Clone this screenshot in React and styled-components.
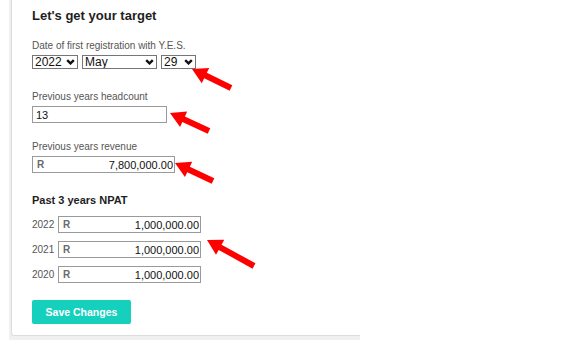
import React, { useState } from "react";
import styled, { createGlobalStyle } from "styled-components";

const GlobalStyle = createGlobalStyle`
  html, body {
    margin: 0;
    padding: 0;
    background: #ffffff;
    font-family: "Liberation Sans", Arial, sans-serif;
  }
`;

const Page = styled.div`
  position: relative;
  width: 572px;
  height: 340px;
  overflow: hidden;
  background: #ffffff;
`;

const Panel = styled.div`
  margin-left: 9px;
  width: 349px;
  height: 340px;
  padding-left: 2px;
  background: #f0f0f0;
`;

const Card = styled.div`
  display: flex;
  flex-direction: column;
  align-items: flex-start;
  background: #ffffff;
  border-left: 1px solid #dcdcdc;
  border-bottom: 1px solid #dcdcdc;
  border-bottom-left-radius: 3px;
  padding: 8px 0 11px 20px;
`;

const Title = styled.h2`
  margin: 0 0 16px;
  font-size: 13px;
  line-height: 16px;
  font-weight: 700;
  color: #1e1e1e;
`;

const Field = styled.div`
  display: flex;
  flex-direction: column;
  gap: 3px;
  margin-bottom: ${(p) => p.$gap || 0}px;
`;

const Label = styled.label`
  font-size: 10px;
  line-height: 12px;
  color: #555555;
`;

const SelectRow = styled.div`
  display: flex;
  gap: 4px;
`;

const SelectWrap = styled.div`
  position: relative;
  display: flex;
  width: ${(p) => p.$w}px;
  height: 14px;
`;

const Select = styled.select`
  appearance: none;
  -webkit-appearance: none;
  width: 100%;
  height: 100%;
  padding: 0 12px 0 2px;
  margin: 0;
  border: 1px solid #767676;
  border-radius: 0;
  background: #ffffff;
  font-family: "Liberation Sans", Arial, sans-serif;
  font-size: 12px;
  line-height: 12px;
  color: #111111;
  box-sizing: border-box;
  outline: none;
`;

const Chevron = styled.svg`
  position: absolute;
  right: 3px;
  top: 4px;
  pointer-events: none;
`;

const TextInput = styled.input`
  width: ${(p) => p.$w}px;
  height: 17px;
  box-sizing: border-box;
  margin: 0;
  padding: 0 3px;
  border: 1px solid #9a9a9a;
  font-family: "Liberation Sans", Arial, sans-serif;
  font-size: 11px;
  color: #111111;
  outline: none;
`;

const MoneyBox = styled.div`
  display: flex;
  align-items: center;
  width: 143px;
  height: 17px;
  box-sizing: border-box;
  border: 1px solid #9a9a9a;
  padding: 0 1px 0 4px;
  background: #ffffff;
`;

const Currency = styled.span`
  font-size: 10px;
  font-weight: 700;
  color: #6a6a6a;
`;

const MoneyInput = styled.input`
  flex: 1;
  min-width: 0;
  border: none;
  padding: 0;
  margin: 0;
  text-align: right;
  font-family: "Liberation Sans", Arial, sans-serif;
  font-size: 11px;
  color: #111111;
  background: transparent;
  outline: none;
`;

const SubTitle = styled.h3`
  margin: 0 0 9px;
  font-size: 11px;
  line-height: 13px;
  font-weight: 700;
  color: #1e1e1e;
`;

const YearList = styled.div`
  display: flex;
  flex-direction: column;
  gap: 8px;
  margin-bottom: 17px;
`;

const YearRow = styled.div`
  display: flex;
  align-items: center;
  gap: 4px;
`;

const Year = styled.span`
  width: 22px;
  font-size: 10px;
  color: #555555;
`;

const Button = styled.button`
  width: 99px;
  height: 24px;
  border: none;
  border-radius: 2px;
  background: #14d0bd;
  color: #ffffff;
  font-family: "Liberation Sans", Arial, sans-serif;
  font-size: 10.5px;
  font-weight: 700;
  cursor: pointer;
`;

const Overlay = styled.svg`
  position: absolute;
  left: 0;
  top: 0;
  pointer-events: none;
`;

const arrows = [
  { tip: [192, 69], tail: [231, 88] },
  { tip: [170, 113], tail: [209, 131] },
  { tip: [175, 163], tail: [213, 181] },
  { tip: [207, 240], tail: [254, 266] },
];

const arrowPoints = ({ tip, tail }) => {
  const dx = tip[0] - tail[0];
  const dy = tip[1] - tail[1];
  const len = Math.hypot(dx, dy);
  const ux = dx / len;
  const uy = dy / len;
  const nx = -uy;
  const ny = ux;
  const head = 15;
  const hw = 8.5;
  const sw = 3;
  const bx = tip[0] - ux * head;
  const by = tip[1] - uy * head;
  const p = [
    [tail[0] + nx * sw, tail[1] + ny * sw],
    [bx + nx * sw, by + ny * sw],
    [bx + nx * hw, by + ny * hw],
    tip,
    [bx - nx * hw, by - ny * hw],
    [bx - nx * sw, by - ny * sw],
    [tail[0] - nx * sw, tail[1] - ny * sw],
  ];
  return p.map((q) => q.join(",")).join(" ");
};

const npat = [
  { year: "2022", value: "1,000,000.00" },
  { year: "2021", value: "1,000,000.00" },
  { year: "2020", value: "1,000,000.00" },
];

const DropDown = ({ width, value, onChange, options }) => (
  <SelectWrap $w={width}>
    <Select value={value} onChange={onChange}>
      {options.map((o) => (
        <option key={o}>{o}</option>
      ))}
    </Select>
    <Chevron width="9" height="6" viewBox="0 0 9 6">
      <path d="M1.2 1.2 L4.5 4.4 L7.8 1.2" fill="none" stroke="#111" strokeWidth="2.4" />
    </Chevron>
  </SelectWrap>
);

const App = () => {
  const [values, setValues] = useState({
    year: "2022",
    month: "May",
    day: "29",
    headcount: "13",
    revenue: "7,800,000.00",
  });

  const handleChange = (name) => (event) => {
    setValues({ ...values, [name]: event.target.value });
  };

  return (
    <>
      <GlobalStyle />
      <Page>
        <Panel>
          <Card>
            <Title>Let's get your target</Title>

            <Field $gap={22}>
              <Label>Date of first registration with Y.E.S.</Label>
              <SelectRow>
                <DropDown width={46} value={values.year} onChange={handleChange("year")} options={["2022", "2021", "2020"]} />
                <DropDown width={75} value={values.month} onChange={handleChange("month")} options={["April", "May", "June"]} />
                <DropDown width={35} value={values.day} onChange={handleChange("day")} options={["28", "29", "30"]} />
              </SelectRow>
            </Field>

            <Field $gap={18}>
              <Label>Previous years headcount</Label>
              <TextInput $w={135} value={values.headcount} onChange={handleChange("headcount")} />
            </Field>

            <Field $gap={21}>
              <Label>Previous years revenue</Label>
              <MoneyBox>
                <Currency>R</Currency>
                <MoneyInput value={values.revenue} onChange={handleChange("revenue")} />
              </MoneyBox>
            </Field>

            <SubTitle>Past 3 years NPAT</SubTitle>
            <YearList>
              {npat.map((row) => (
                <YearRow key={row.year}>
                  <Year>{row.year}</Year>
                  <MoneyBox>
                    <Currency>R</Currency>
                    <MoneyInput defaultValue={row.value} />
                  </MoneyBox>
                </YearRow>
              ))}
            </YearList>

            <Button>Save Changes</Button>
          </Card>
        </Panel>

        <Overlay width="572" height="340" viewBox="0 0 572 340">
          {arrows.map((a, i) => (
            <polygon key={i} points={arrowPoints(a)} fill="#ff0000" />
          ))}
        </Overlay>
      </Page>
    </>
  );
};

export default App;
